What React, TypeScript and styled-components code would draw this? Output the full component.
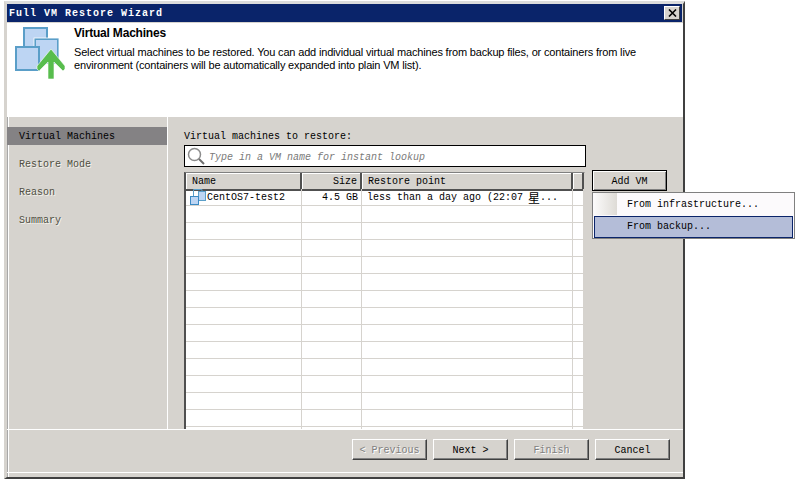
import React from 'react';
import styled, { createGlobalStyle } from 'styled-components';

const face = '#d6d3ce';
const bitmapFont = '"Liberation Mono", "Noto Sans CJK SC", monospace';

const GlobalStyle = createGlobalStyle`
    html, body {
        margin: 0;
        padding: 0;
        background: #ffffff;
    }
`;

const Page = styled.div`
    width: 806px;
    height: 496px;
    padding: 1px 0 0 4px;
    box-sizing: border-box;
    overflow: hidden;
`;

const Window = styled.div`
    width: 681px;
    height: 478px;
    box-sizing: border-box;
    background: ${face};
    border-top: 3px solid #dcdcdc;
    border-left: 3px solid ${face};
    border-right: 2px solid #404040;
    border-bottom: 2px solid #404040;
    box-shadow: inset 1px 0 0 #a8a8a8, inset 2px 0 0 #ffffff;
    display: flex;
    flex-direction: column;
`;

const TitleBar = styled.div`
    height: 18px;
    margin-right: 1px;
    background: #0a246a;
    display: flex;
    align-items: center;
    justify-content: space-between;
    padding: 0 2px 0 2px;
    flex-shrink: 0;
`;

const TitleText = styled.span`
    font: bold 10px ${bitmapFont};
    letter-spacing: 1px;
    color: #ffffff;
`;

const CloseButton = styled.div`
    width: 16px;
    height: 14px;
    background: ${face};
    border: 1px solid;
    border-color: #ffffff #404040 #404040 #ffffff;
    box-sizing: border-box;
    display: flex;
    align-items: center;
    justify-content: center;
`;

const Header = styled.div`
    height: 95px;
    background: #ffffff;
    display: flex;
    flex-shrink: 0;
    border-top: 1px solid ${face};
    box-sizing: border-box;
`;

const HeaderIcon = styled.div`
    width: 67px;
    padding: 3px 0 0 8px;
    box-sizing: border-box;
    flex-shrink: 0;
`;

const HeaderText = styled.div`
    padding-top: 3px;
    font-family: "Liberation Sans", Arial, sans-serif;
    font-size: 11px;
    letter-spacing: -0.17px;
    color: #000000;
`;

const HeaderTitle = styled.div`
    font-size: 12px;
    font-weight: bold;
    letter-spacing: -0.2px;
    line-height: 15px;
    margin-bottom: 5px;
`;

const HeaderLine = styled.div`
    line-height: 13px;
    white-space: nowrap;
`;

const Body = styled.div`
    height: 313px;
    display: flex;
    flex-shrink: 0;
    border-bottom: 1px solid #ffffff;
    box-sizing: border-box;
`;

const Nav = styled.div`
    width: 161px;
    padding-top: 10px;
    box-sizing: border-box;
    border-right: 1px solid #ffffff;
    flex-shrink: 0;
`;

const NavItem = styled.div<{ $active?: boolean }>`
    height: 18px;
    margin-bottom: 10px;
    padding: 1px 0 0 12px;
    box-sizing: border-box;
    display: flex;
    align-items: center;
    font: 10px ${bitmapFont};
    background: ${(props) => (props.$active ? '#848284' : 'transparent')};
    color: ${(props) => (props.$active ? '#000000' : '#4f4f42')};
    text-shadow: ${(props) => (props.$active ? 'none' : '1px 1px 0 #f4f2ec')};
`;

const Main = styled.div`
    flex: 1;
    padding: 13px 0 0 16px;
    position: relative;
`;

const Label = styled.div`
    font: 10px/14px ${bitmapFont};
    color: #000000;
    height: 15px;
`;

const SearchBox = styled.div`
    width: 402px;
    height: 22px;
    background: #ffffff;
    border: 1px solid #000000;
    box-sizing: border-box;
    display: flex;
    align-items: center;
    gap: 4px;
    padding-left: 2px;
    margin-bottom: 5px;
`;

const SearchHint = styled.span`
    font: italic 10px ${bitmapFont};
    color: #7a7a7a;
    padding-top: 2px;
`;

const TableRow = styled.div`
    display: flex;
    align-items: flex-start;
    gap: 7px;
`;

const Table = styled.div`
    width: 401px;
    height: 257px;
    box-sizing: border-box;
    background: #ffffff;
    border-left: 2px solid #505050;
    border-top: 1px solid #808080;
    border-right: 1px solid ${face};
    overflow: hidden;
    flex-shrink: 0;
`;

const Columns = styled.div`
    display: grid;
    grid-template-columns: 116px 60px 211px 1fr;
    height: 16px;
`;

const HeadCell = styled.div<{ $right?: boolean }>`
    background: ${face};
    border-right: 2px solid #505050;
    border-bottom: 2px solid #505050;
    box-shadow: inset 1px 1px 0 #ffffff;
    box-sizing: border-box;
    padding: 1px 3px 0 6px;
    font: 10px/15px ${bitmapFont};
    color: #000000;
    text-align: ${(props) => (props.$right ? 'right' : 'left')};
    white-space: nowrap;
`;

const Cells = styled.div`
    display: grid;
    grid-template-columns: 116px 60px 211px 1fr;
    height: 17px;
    box-sizing: border-box;
    border-bottom: 1px solid ${face};
`;

const Cell = styled.div<{ $right?: boolean }>`
    border-right: 1px solid ${face};
    box-sizing: border-box;
    padding: 2px 3px 0 5px;
    font: 10px/14px ${bitmapFont};
    color: #000000;
    display: flex;
    align-items: center;
    justify-content: ${(props) => (props.$right ? 'flex-end' : 'flex-start')};
    white-space: pre;
`;

const CjkGlyph = styled.span`
    font: 12px/14px "Noto Sans CJK SC", sans-serif;
    margin-left: 5px;
`;

const AddButton = styled.div`
    width: 75px;
    height: 21px;
    margin-top: -2px;
    padding-top: 1px;
    box-sizing: border-box;
    background: ${face};
    border: 1px solid #000000;
    box-shadow: inset 1px 1px 0 #ffffff, inset -1px -1px 0 #808080;
    display: flex;
    align-items: center;
    justify-content: center;
    font: 10px ${bitmapFont};
    color: #000000;
`;

const Menu = styled.div`
    position: absolute;
    left: 424px;
    top: 75px;
    width: 203px;
    height: 47px;
    box-sizing: border-box;
    background: #fcfafc;
    border: 1px solid #808080;
    padding: 0 1px;
    z-index: 2;
`;

const MenuItem = styled.div<{ $selected?: boolean }>`
    height: 22px;
    box-sizing: border-box;
    display: flex;
    align-items: center;
    padding-left: ${(props) => (props.$selected ? '32px' : '33px')};
    padding-bottom: ${(props) => (props.$selected ? '2px' : '0')};
    font: 10px ${bitmapFont};
    color: #000000;
    background: ${(props) =>
        props.$selected
            ? '#b4bdd8'
            : 'linear-gradient(90deg, #fbfafa 0, #dedbd6 23px, #fcfafc 23px)'};
    border: ${(props) => (props.$selected ? '1px solid #0a246a' : 'none')};
    margin-bottom: 1px;
`;

const Footer = styled.div`
    flex: 1;
    display: flex;
    flex-direction: column;
`;

const ButtonRow = styled.div`
    height: 43px;
    display: flex;
    justify-content: flex-end;
    align-items: flex-start;
    gap: 6px;
    padding: 9px 13px 0 0;
    border-bottom: 1px solid #ffffff;
    box-sizing: border-box;
`;

const WizardButton = styled.div<{ $disabled?: boolean }>`
    width: 75px;
    height: 21px;
    padding-top: 1px;
    box-sizing: border-box;
    background: ${face};
    border: 1px solid;
    border-color: #ffffff #404040 #404040 #ffffff;
    box-shadow: inset -1px -1px 0 #808080;
    display: flex;
    align-items: center;
    justify-content: center;
    font: 10px ${bitmapFont};
    color: ${(props) => (props.$disabled ? '#808080' : '#000000')};
    text-shadow: ${(props) => (props.$disabled ? '1px 1px 0 #ffffff' : 'none')};
`;

const HeaderSvg = styled.svg`
    display: block;
`;

const VmSvg = styled.svg`
    flex-shrink: 0;
    margin: -2px 1px 0 -1px;
`;

const RestoreIcon = () => (
    <HeaderSvg width="52" height="56" viewBox="0 0 52 56">
        <rect x="9" y="2" width="23" height="23" fill="#bdd5f3" stroke="#5a9ec8" strokeWidth="2" />
        <rect x="20" y="13" width="23" height="24" fill="#bdd5f3" stroke="#5a9ec8" strokeWidth="2" />
        <rect x="19" y="12" width="25" height="26" fill="none" stroke="#ffffff" strokeWidth="0.8" />
        <rect x="1" y="21" width="23" height="23" fill="#bdd5f3" stroke="#5a9ec8" strokeWidth="2" />
        <path
            d="M36 23 L50 40 L50 43 L48 45 L39 36 L39 53 L33 53 L33 36 L24 45 L22 43 L22 40 Z"
            fill="#58bd4d"
            stroke="#ffffff"
            strokeWidth="0.6"
        />
    </HeaderSvg>
);

const SearchIcon = () => (
    <svg width="18" height="18" viewBox="0 0 18 18">
        <circle cx="7.5" cy="7.5" r="6" fill="none" stroke="#8c8c8c" strokeWidth="1.5" />
        <path d="M12 12 L17 17" stroke="#6e6e6e" strokeWidth="2" />
    </svg>
);

const VmIcon = () => (
    <VmSvg width="16" height="16" viewBox="0 0 16 16">
        <path d="M3.5 7 V0.5 H12 V2" fill="none" stroke="#5a9ec8" />
        <rect x="8.5" y="2.5" width="7" height="9" fill="#bdd5f3" stroke="#5a9ec8" />
        <rect x="0.5" y="7.5" width="8" height="8" fill="#bdd5f3" stroke="#3b8ac4" />
    </VmSvg>
);

const CloseGlyph = () => (
    <svg width="9" height="8" viewBox="0 0 9 8">
        <path d="M1 0.5 L8 7.5 M8 0.5 L1 7.5" stroke="#000000" strokeWidth="1.6" />
    </svg>
);

const emptyRows = Array.from({ length: 14 }, (_, i) => i);

export default function App() {
    return (
        <Page>
            <GlobalStyle />
            <Window>
                <TitleBar>
                    <TitleText>Full VM Restore Wizard</TitleText>
                    <CloseButton>
                        <CloseGlyph />
                    </CloseButton>
                </TitleBar>
                <Header>
                    <HeaderIcon>
                        <RestoreIcon />
                    </HeaderIcon>
                    <HeaderText>
                        <HeaderTitle>Virtual Machines</HeaderTitle>
                        <HeaderLine>
                            Select virtual machines to be restored. You can add individual virtual machines from backup files, or containers from live
                        </HeaderLine>
                        <HeaderLine>
                            environment (containers will be automatically expanded into plain VM list).
                        </HeaderLine>
                    </HeaderText>
                </Header>
                <Body>
                    <Nav>
                        <NavItem $active>Virtual Machines</NavItem>
                        <NavItem>Restore Mode</NavItem>
                        <NavItem>Reason</NavItem>
                        <NavItem>Summary</NavItem>
                    </Nav>
                    <Main>
                        <Label>Virtual machines to restore:</Label>
                        <SearchBox>
                            <SearchIcon />
                            <SearchHint>Type in a VM name for instant lookup</SearchHint>
                        </SearchBox>
                        <TableRow>
                            <Table>
                                <Columns>
                                    <HeadCell>Name</HeadCell>
                                    <HeadCell $right>Size</HeadCell>
                                    <HeadCell>Restore point</HeadCell>
                                    <HeadCell />
                                </Columns>
                                <Cells>
                                    <Cell>
                                        <VmIcon />
                                        CentOS7-test2
                                    </Cell>
                                    <Cell $right>4.5 GB</Cell>
                                    <Cell>
                                        less than a day ago (22:07<CjkGlyph>星</CjkGlyph>...
                                    </Cell>
                                    <Cell />
                                </Cells>
                                {emptyRows.map((row) => (
                                    <Cells key={row}>
                                        <Cell />
                                        <Cell />
                                        <Cell />
                                        <Cell />
                                    </Cells>
                                ))}
                            </Table>
                            <AddButton>Add VM</AddButton>
                        </TableRow>
                        <Menu>
                            <MenuItem>From infrastructure...</MenuItem>
                            <MenuItem $selected>From backup...</MenuItem>
                        </Menu>
                    </Main>
                </Body>
                <Footer>
                    <ButtonRow>
                        <WizardButton $disabled>&lt; Previous</WizardButton>
                        <WizardButton>Next &gt;</WizardButton>
                        <WizardButton $disabled>Finish</WizardButton>
                        <WizardButton>Cancel</WizardButton>
                    </ButtonRow>
                </Footer>
            </Window>
        </Page>
    );
}
